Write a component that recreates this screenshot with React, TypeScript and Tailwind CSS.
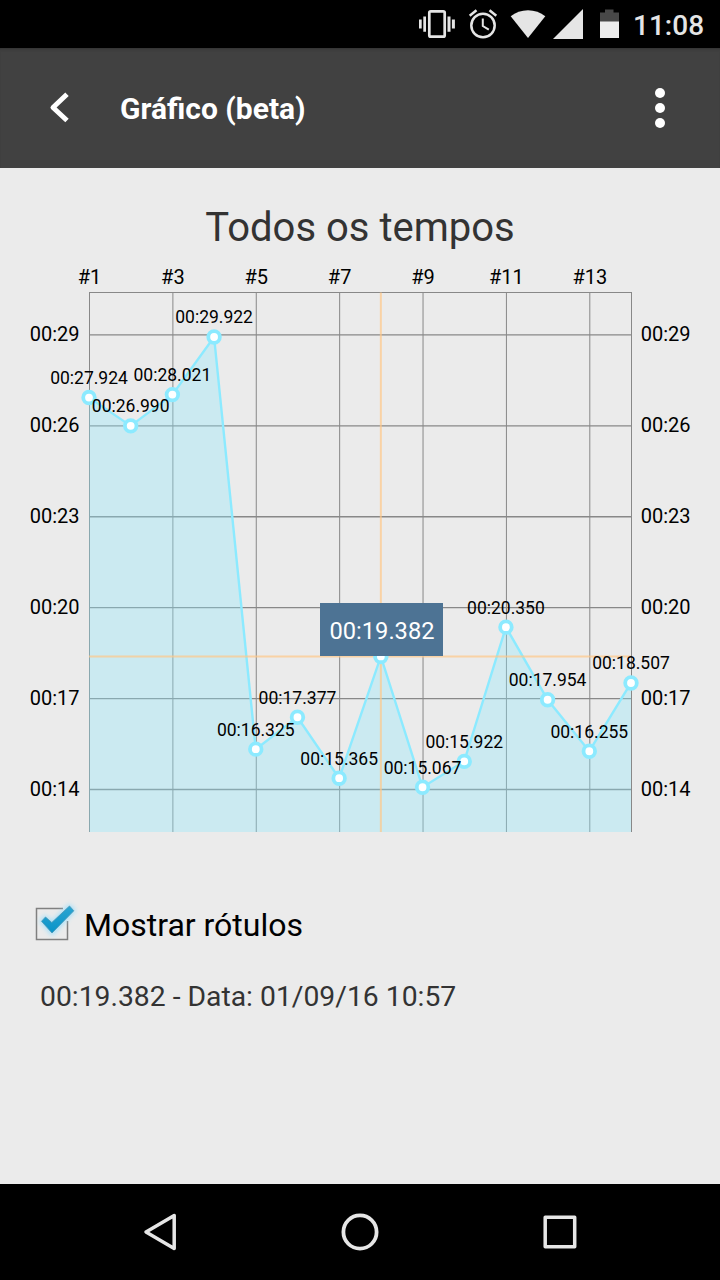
import React from 'react';

const times = [
  { label: '00:27.924', value: 27.924 },
  { label: '00:26.990', value: 26.99 },
  { label: '00:28.021', value: 28.021 },
  { label: '00:29.922', value: 29.922 },
  { label: '00:16.325', value: 16.325 },
  { label: '00:17.377', value: 17.377 },
  { label: '00:15.365', value: 15.365 },
  { label: '00:19.382', value: 19.382 },
  { label: '00:15.067', value: 15.067 },
  { label: '00:15.922', value: 15.922 },
  { label: '00:20.350', value: 20.35 },
  { label: '00:17.954', value: 17.954 },
  { label: '00:16.255', value: 16.255 },
  { label: '00:18.507', value: 18.507 },
];

const yLabels = ['00:29', '00:26', '00:23', '00:20', '00:17', '00:14'];
const selected = 7;

// Plot area inside the 720x580 drawing
const left = 89;
const right = 631;
const top = 32.5;
const bottom = 572;
const stepX = (right - left) / (times.length - 1);

const px = (i: number) => left + i * stepX;
const py = (value: number) => 77 + (29.922 - value) * 30.31;
const gridY = (i: number) => 74.9 + i * 90.92;

const StatusBar: React.FC = () => (
  <div className="flex h-12 items-center justify-end bg-black pr-4 text-[#e5e5e5]">
    <svg className="h-12 w-[218px]" viewBox="415 0 218 48" fill="currentColor">
      {/* Vibrate */}
      <rect x="429.3" y="11.3" width="15.4" height="25.4" rx="1.5" fill="none" stroke="currentColor" strokeWidth="2.7" />
      <path d="M419 19.5h2.7v9H419zM423.3 16.5h2.7v15.3h-2.7zM447.5 16.5h3v15.3h-3zM451.9 19.5h3v9h-3z" />
      {/* Alarm */}
      <circle cx="483" cy="25.5" r="11.7" fill="none" stroke="currentColor" strokeWidth="2.5" />
      <path d="M482.8 18.5v7.5l6 3.7" fill="none" stroke="currentColor" strokeWidth="2" />
      <path d="M469.7 15.8l6.8-5.6M496.3 15.8l-6.8-5.6" stroke="currentColor" strokeWidth="2.5" />
      {/* Wifi and signal */}
      <path d="M528 38L510.7 16.3C520 8.2 536 8.2 545.3 16.3z" />
      <path d="M583 9v30h-30z" />
      {/* Battery */}
      <path d="M605 9.5h8.5v3h5.500V22h-19v-9.500h5z" fill="#484848" />
      <path d="M600 21.5h19V38h-19z" fill="#ececec" />
    </svg>
    <span className="w-[71px] pt-[3px] text-[28px] leading-none font-medium whitespace-nowrap">11:08</span>
  </div>
);

const Header: React.FC = () => (
  <div className="flex h-[120px] items-center bg-[#414141] text-white shadow-[inset_0_3px_3px_-2px_#303030]">
    <svg className="ml-10 h-10 w-10" viewBox="0 0 40 40" fill="none" stroke="currentColor">
      <path d="M27 6.300L13 19.500l14 13" strokeWidth="5" strokeLinejoin="round" />
    </svg>
    <h1 className="ml-10 pt-0.5 text-[30px] leading-none font-bold">Gráfico (beta)</h1>
    <div className="mr-[55px] ml-auto flex flex-col gap-[5px]">
      <span className="h-2.5 w-2.5 rounded-full bg-white" />
      <span className="h-2.5 w-2.5 rounded-full bg-white" />
      <span className="h-2.5 w-2.5 rounded-full bg-white" />
    </div>
  </div>
);

const Chart: React.FC = () => {
  const line = times.map((t, i) => `${px(i)},${py(t.value)}`).join(' ');
  return (
    <svg className="block h-[580px] w-[720px]" viewBox="0 0 720 580">
      <g stroke="#888888" strokeWidth="1">
        {times.map((t, i) =>
          i % 2 === 0 ? <line key={t.label} x1={px(i) + 0.5} x2={px(i) + 0.5} y1={top} y2={bottom} /> : null
        )}
        <line x1={right + 0.5} x2={right + 0.5} y1={top} y2={bottom} />
        <line x1={left} x2={right + 1} y1={top} y2={top} />
        {yLabels.map((label, i) => (
          <line key={label} x1={left} x2={right} y1={gridY(i)} y2={gridY(i)} strokeWidth="1.3" />
        ))}
      </g>

      {/* Area, line and points */}
      <polygon points={`${left},${bottom} ${line} ${right},${bottom}`} fill="#8ceaff" fillOpacity="0.33" />
      <polyline points={line} fill="none" stroke="#8ceaff" strokeWidth="2.4" />
      <g stroke="#ffc888" strokeOpacity="0.7" strokeWidth="2">
        <line x1={px(selected)} x2={px(selected)} y1={top} y2={bottom} />
        <line x1={left} x2={right} y1={py(times[selected].value)} y2={py(times[selected].value)} />
      </g>
      {times.map((t, i) => (
        <circle key={t.label} cx={px(i)} cy={py(t.value)} r="5.8" fill="#ffffff" stroke="#8ceaff" strokeWidth="3.8" />
      ))}

      <g fontSize="17.5" textAnchor="middle">
        {times.map((t, i) =>
          i === selected ? null : (
            <text key={t.label} x={px(i)} y={py(t.value) - 13.6}>
              {t.label}
            </text>
          )
        )}
      </g>
      <g fontSize="20">
        {times.map((t, i) =>
          i % 2 === 0 ? (
            <text key={t.label} x={px(i) + 0.5} y="24.4" textAnchor="middle">
              #{i + 1}
            </text>
          ) : null
        )}
        {yLabels.map((label, i) => (
          <React.Fragment key={label}>
            <text x="79.5" y={gridY(i) + 6} textAnchor="end">{label}</text>
            <text x="640.8" y={gridY(i) + 6}>{label}</text>
          </React.Fragment>
        ))}
      </g>

      {/* Marker */}
      <rect x="320" y="343" width="123" height="53" fill="#4d7394" />
      <text x="382" y="379.2" fontSize="24" fill="#ffffff" textAnchor="middle" textLength="105" lengthAdjust="spacingAndGlyphs">
        {times[selected].label}
      </text>
    </svg>
  );
};

const Checkbox: React.FC = () => (
  <svg className="h-[50px] w-[50px]" viewBox="30 898 50 50">
    <defs>
      <linearGradient id="check" x1="0" y1="0" x2="0" y2="1">
        <stop offset="0" stopColor="#2ba5d2" />
        <stop offset="1" stopColor="#0a93c8" />
      </linearGradient>
      <filter id="glow" x="-50%" y="-50%" width="200%" height="200%">
        <feGaussianBlur stdDeviation="2.5" />
      </filter>
    </defs>
    <path d="M63 908.5H36.500v31h31V921" fill="none" stroke="#808080" strokeWidth="1.5" />
    <path d="M40 921l5-6 7 6.500 17.500-17.500 6 6.500-23.500 25z" fill="#8bdcff" opacity="0.85" filter="url(#glow)" />
    <path d="M41.500 921.300l4-4.300 6.300 5.500 17.700-16.500 4.300 4.800L52 933z" fill="url(#check)" stroke="#4b98b5" strokeWidth="0.8" />
  </svg>
);

const App: React.FC = () => {
  return (
    <div className="flex h-[1280px] w-[720px] flex-col overflow-hidden bg-[#ebebeb] font-[Roboto,sans-serif] text-black">
      <StatusBar />
      <Header />
      <main className="flex flex-1 flex-col">
        <h2 className="h-[92px] pt-9 text-center text-[40px] leading-[48px] text-[#333333]">Todos os tempos</h2>
        <Chart />
        <label className="mt-[58px] flex items-center pl-[30px]">
          <Checkbox />
          <span className="ml-1 h-[50px] text-[32px] leading-[54px]">Mostrar rótulos</span>
        </label>
        <p className="mt-[33px] pl-10 text-[28.3px] leading-8 text-[#333333]">00:19.382 - Data: 01/09/16 10:57</p>
      </main>
      <nav className="flex h-24 items-center justify-center gap-[160px] bg-black text-[#e6e6e6]">
        <svg className="h-10 w-10" viewBox="0 0 40 40" fill="none" stroke="currentColor" strokeWidth="3.5" strokeLinejoin="round">
          <path d="M34.2 3.500v33L6 20z" />
        </svg>
        <svg className="h-10 w-10" viewBox="0 0 40 40" fill="none" stroke="currentColor" strokeWidth="3.8">
          <circle cx="20" cy="20" r="16.6" />
        </svg>
        <svg className="h-10 w-10" viewBox="0 0 40 40" fill="none" stroke="currentColor" strokeWidth="3.5" strokeLinejoin="round">
          <rect x="5.2" y="5.2" width="29.5" height="29.5" />
        </svg>
      </nav>
    </div>
  );
};

export default App;
